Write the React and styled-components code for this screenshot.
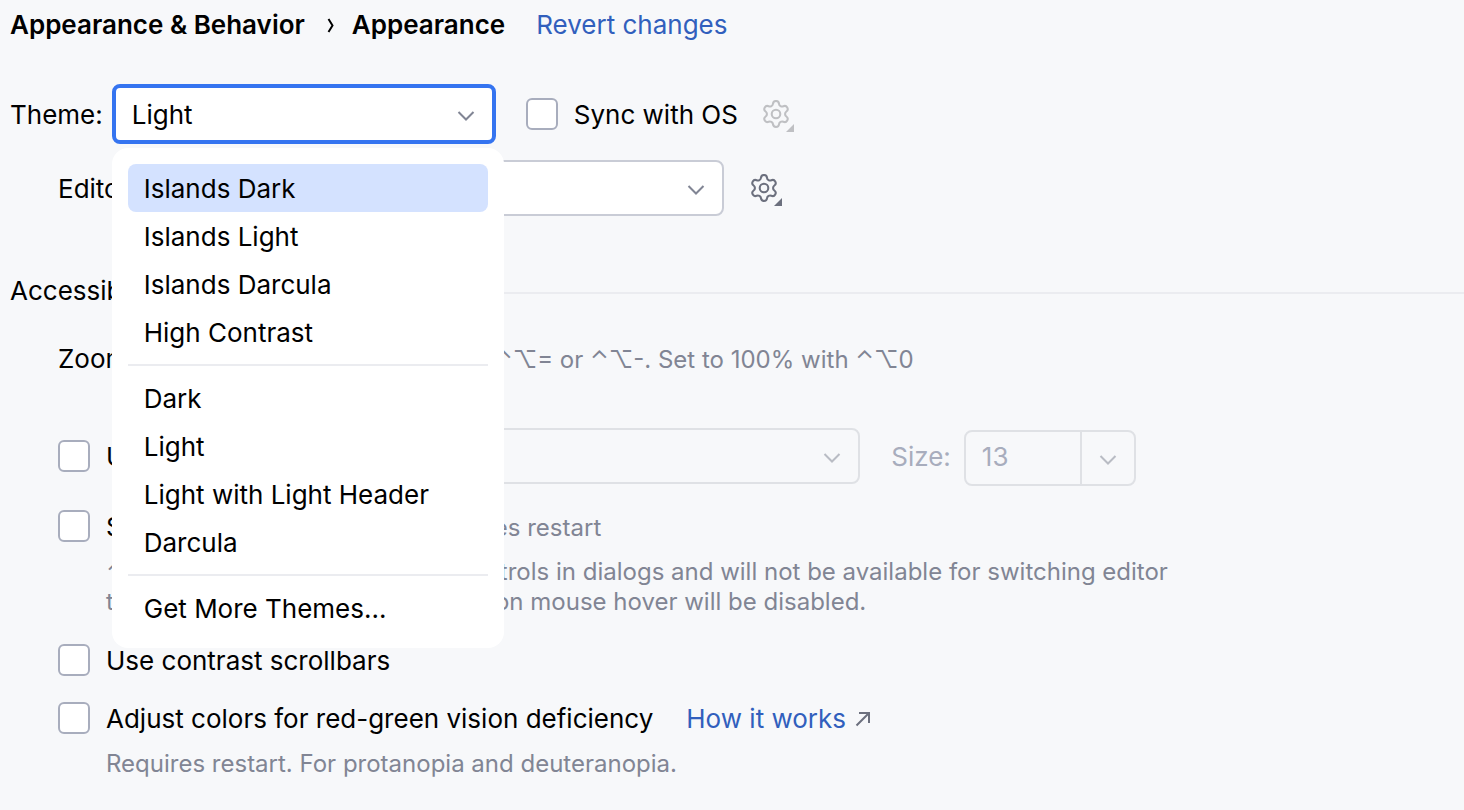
import React from "react";
import styled, { createGlobalStyle } from "styled-components";

export default function App() {
  return (
    <>
      <GlobalStyle />
      <Page>
        <Breadcrumbs>
          <b>Appearance &amp; Behavior</b>
          <CrumbArrow viewBox="0 0 8 16" aria-hidden="true">
            <path d="M1.5 2 5.5 8.5l-4 6.5" />
          </CrumbArrow>
          <b>Appearance</b>
          <RevertLink href="#revert">Revert changes</RevertLink>
        </Breadcrumbs>

        <ThemeRow>
          <FieldLabel htmlFor="theme">Theme:</FieldLabel>
          <ThemePicker>
            <Combo id="theme" value="Light" width={384} focused />
            <ThemeMenu />
          </ThemePicker>
          <Check id="sync" label="Sync with OS" />
          <GearButton label="Sync settings" disabled />
        </ThemeRow>

        <SchemeRow>
          <FieldLabel htmlFor="scheme">Editor color scheme:</FieldLabel>
          <Combo id="scheme" value="Light" width={400} />
          <GearButton label="Scheme settings" />
        </SchemeRow>

        <GroupTitle>Accessibility</GroupTitle>

        <Group>
          <ZoomRow>
            <FieldLabel htmlFor="zoom">Zoom:</FieldLabel>
            <Combo id="zoom" value="100%" width={177} />
            <Hint>Change with ⌃⌥= or ⌃⌥-. Set to 100% with ⌃⌥0</Hint>
          </ZoomRow>

          <FontRow>
            <Check id="custom-font" label="Use custom font:" />
            <Combo id="font" value="Inter" width={529} disabled />
            <SizeField>
              <FieldLabel htmlFor="size">Size:</FieldLabel>
              <SizeBox>
                <input id="size" defaultValue="13" disabled />
                <button disabled aria-label="Choose size">
                  <Chevron />
                </button>
              </SizeBox>
            </SizeField>
          </FontRow>

          <ReaderRow>
            <Check id="readers" label="Support screen readers" />
            <Hint>Requires restart</Hint>
          </ReaderRow>
          <Note>
            ⌃⇥ and ⌃⇧⇥ will navigate UI controls in dialogs and will not be available for switching editor
            <br />
            tabs or other IDE actions. Tooltips on mouse hover will be disabled.
          </Note>

          <ScrollbarRow>
            <Check id="scrollbars" label="Use contrast scrollbars" />
          </ScrollbarRow>

          <ColorRow>
            <Check id="colors" label="Adjust colors for red-green vision deficiency" />
            <HelpLink href="#how">
              How it works
              <svg viewBox="0 0 16 16" aria-hidden="true">
                <path d="M4 2h10v10M14 2 1.5 14.5" />
              </svg>
            </HelpLink>
          </ColorRow>
          <Note>Requires restart. For protanopia and deuteranopia.</Note>
        </Group>
      </Page>
    </>
  );
}

const themes = [
  ["Islands Dark", "Islands Light", "Islands Darcula", "High Contrast"],
  ["Dark", "Light", "Light with Light Header", "Darcula"],
  ["Get More Themes..."],
];

function ThemeMenu() {
  return (
    <Menu>
      {themes.map((group) => (
        <MenuGroup key={group[0]}>
          {group.map((name) => (
            <li key={name}>
              <MenuItem $active={name === "Islands Dark"}>{name}</MenuItem>
            </li>
          ))}
        </MenuGroup>
      ))}
    </Menu>
  );
}

function Combo({ id, value, width, focused, disabled }) {
  return (
    <ComboBox $width={width} $focused={focused} $disabled={disabled}>
      <select id={id} disabled={disabled} defaultValue={value}>
        <option>{value}</option>
      </select>
      <Chevron />
    </ComboBox>
  );
}

function Chevron() {
  return (
    <ChevronIcon viewBox="0 0 18 10" aria-hidden="true">
      <path d="M1.5 1 9 8.5 16.5 1" />
    </ChevronIcon>
  );
}

function Check({ id, label }) {
  return (
    <CheckLabel htmlFor={id}>
      <input type="checkbox" id={id} />
      <span>{label}</span>
    </CheckLabel>
  );
}

function GearButton({ label, disabled }) {
  return (
    <IconButton aria-label={label} disabled={disabled}>
      <svg viewBox="0 0 32 32" aria-hidden="true">
        <g transform="translate(-1.6 -1.6) scale(1.3)" strokeWidth="1.6">
          <path d="M9.671 4.136a2.34 2.34 0 0 1 4.659 0 2.34 2.34 0 0 0 3.319 1.915 2.34 2.34 0 0 1 2.33 4.033 2.34 2.34 0 0 0 0 3.831 2.34 2.34 0 0 1-2.33 4.033 2.34 2.34 0 0 0-3.319 1.915 2.34 2.34 0 0 1-4.659 0 2.34 2.34 0 0 0-3.32-1.915 2.34 2.34 0 0 1-2.33-4.033 2.34 2.34 0 0 0 0-3.831A2.34 2.34 0 0 1 6.35 6.051a2.34 2.34 0 0 0 3.319-1.915" />
          <circle cx="12" cy="12" r="3.3" />
        </g>
        <path className="corner" d="M32 24v8h-8z" />
      </svg>
    </IconButton>
  );
}

const GlobalStyle = createGlobalStyle`
  * {
    box-sizing: border-box;
  }

  body {
    margin: 0;
    background: #f7f8fa;
  }

  input, select, button {
    font: inherit;
    color: inherit;
  }
`;

const Page = styled.main`
  padding-left: 10px;
  font-family: Inter, "Noto Sans", sans-serif;
  font-size: 26px;
  line-height: 32px;
  color: #000;
  white-space: nowrap;
`;

const Breadcrumbs = styled.nav`
  display: flex;
  align-items: center;
  height: 50px;

  b {
    font-weight: 600;
  }
`;

const CrumbArrow = styled.svg`
  width: 8px;
  height: 16px;
  margin: 0 17px 0 22px;
  fill: none;
  stroke: #000;
  stroke-width: 2;
`;

const RevertLink = styled.a`
  margin-left: 31px;
  color: #315fbd;
  text-decoration: none;
`;

const Row = styled.div`
  display: flex;
  align-items: center;
`;

const FieldLabel = styled.label`
  padding-top: 2px;
`;

const ThemeRow = styled(Row)`
  margin-top: 34px;
  gap: 9px;

  label + button {
    margin-left: 15px;
  }
`;

const ThemePicker = styled.div`
  position: relative;
  margin-right: 21px;
`;

const SchemeRow = styled(Row)`
  margin: 16px 0 0 48px;
  gap: 13px;

  button {
    margin-left: 13px;
  }
`;

const ComboBox = styled.div`
  display: flex;
  align-items: center;
  position: relative;
  width: ${(p) => p.$width}px;
  color: ${(p) => (p.$disabled ? "#a8adbd" : "#000")};

  select {
    appearance: none;
    width: 100%;
    height: ${(p) => (p.$focused ? 60 : 56)}px;
    padding: 2px 48px 0 16px;
    border: ${(p) => (p.$focused ? "4px solid #3574f0" : p.$disabled ? "2px solid #dfe1e5" : "2px solid #c9ccd6")};
    border-radius: 8px;
    background: ${(p) => (p.$disabled ? "transparent" : "#fff")};
    opacity: 1;
    outline: none;
  }

  svg {
    position: absolute;
    right: ${(p) => (p.$focused ? 21 : 19)}px;
    stroke: ${(p) => (p.$disabled ? "#b9bcc4" : "#818594")};
    pointer-events: none;
  }
`;

const ChevronIcon = styled.svg`
  width: 18px;
  height: 10px;
  margin-top: 4px;
  fill: none;
  stroke: #b9bcc4;
  stroke-width: 2;
`;

const Menu = styled.div`
  position: absolute;
  z-index: 1;
  top: calc(100% + 4px);
  left: 0;
  width: 392px;
  padding: 16px;
  border-radius: 16px;
  background: #fff;
`;

const MenuGroup = styled.ul`
  margin: 0;
  padding: 0;
  list-style: none;

  & + & {
    margin-top: 8px;
    padding-top: 8px;
    border-top: 2px solid #ebecf0;
  }
`;

const MenuItem = styled.button`
  width: 100%;
  height: 48px;
  padding: 2px 16px 0;
  border: 0;
  border-radius: 8px;
  background: ${(p) => (p.$active ? "#d4e2ff" : "transparent")};
  text-align: left;
`;

const CheckLabel = styled.label`
  display: flex;
  align-items: center;
  gap: 16px;
  height: 32px;

  input {
    appearance: none;
    width: 32px;
    height: 32px;
    margin: 0;
    border: 2px solid #a8adbd;
    border-radius: 6px;
    background: #fff;
  }

  span {
    padding-top: 2px;
  }
`;

const IconButton = styled.button`
  display: flex;
  padding: 4px 0 0;
  border: 0;
  background: none;
  color: ${(p) => (p.disabled ? "#bfc0c3" : "#6c707e")};

  svg {
    width: 32px;
    height: 32px;
    fill: none;
    stroke: currentColor;
  }

  .corner {
    fill: currentColor;
    stroke: none;
  }
`;

const GroupTitle = styled.h2`
  display: flex;
  align-items: center;
  gap: 16px;
  margin: 60px 0 0;
  font-size: 26px;
  font-weight: 400;
  line-height: 30px;

  &::after {
    content: "";
    flex: 1;
    height: 2px;
    margin-top: 4px;
    background: #ebecf0;
  }
`;

const Group = styled.section`
  padding-left: 48px;
`;

const Hint = styled.span`
  padding-top: 4px;
  font-size: 24px;
  line-height: 28px;
  color: #818594;
`;

const ZoomRow = styled(Row)`
  margin-top: 24px;
  gap: 16px;
`;

const FontRow = styled(Row)`
  margin-top: 40px;
  gap: 16px;
`;

const SizeField = styled.div`
  display: flex;
  align-items: center;
  gap: 13px;
  margin-left: 15px;
  color: #a8adbd;
`;

const SizeBox = styled.div`
  display: flex;
  width: 172px;
  height: 56px;
  margin-top: 4px;
  border: 2px solid #dfe1e5;
  border-radius: 8px;

  input {
    flex: 1;
    min-width: 0;
    padding: 0 16px 2px;
    border: 0;
    background: none;
  }

  button {
    display: flex;
    align-items: center;
    justify-content: center;
    width: 54px;
    padding: 0;
    border: 0;
    border-left: 2px solid #dfe1e5;
    background: none;
  }
`;

const ReaderRow = styled(Row)`
  margin-top: 24px;
  gap: 25px;
`;

const Note = styled.p`
  margin: 15px 0 0 48px;
  font-size: 24px;
  line-height: 30px;
  color: #818594;
`;

const ScrollbarRow = styled(Row)`
  margin-top: 27px;
`;

const ColorRow = styled(Row)`
  margin-top: 26px;
  gap: 33px;
`;

const HelpLink = styled.a`
  display: flex;
  align-items: center;
  gap: 9px;
  height: 32px;
  padding-top: 2px;
  color: #315fbd;
  text-decoration: none;

  svg {
    width: 16px;
    height: 16px;
    fill: none;
    stroke: #6c707e;
    stroke-width: 2;
  }
`;
